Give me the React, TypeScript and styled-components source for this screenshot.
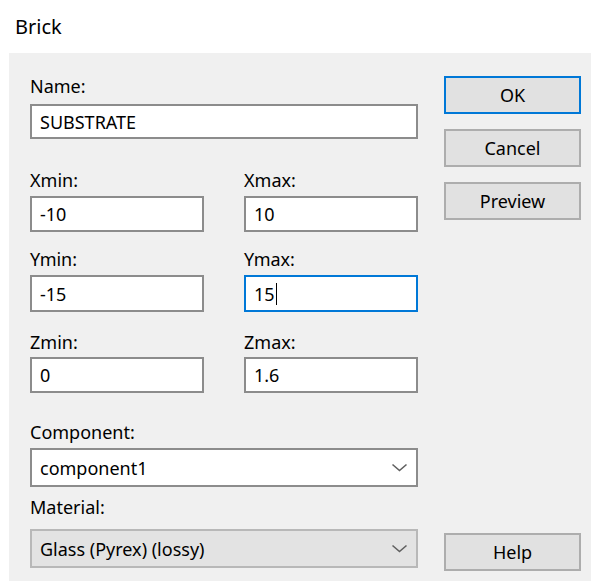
import React from "react";
import styled, { createGlobalStyle, css } from "styled-components";

const GlobalStyle = createGlobalStyle`
  html, body {
    margin: 0;
    padding: 0;
    background: #fff;
  }
  body {
    font-family: "Noto Sans", "Open Sans", "DejaVu Sans", sans-serif;
    color: #000;
  }
`;

const Window = styled.div`
  width: 593px;
  height: 581px;
  display: flex;
  flex-direction: column;
  background: #fff;
  overflow: hidden;
`;

const Title = styled.div`
  height: 53px;
  padding-left: 15px;
  box-sizing: border-box;
  font-size: 20px;
  line-height: 54px;
`;

const Panel = styled.div`
  flex: 1;
  margin-left: 9px;
  margin-right: 2px;
  padding: 0 10px 10px 21px;
  background: #f0f0f0;
  display: grid;
  grid-template-columns: 388px 137px;
  column-gap: 26px;
`;

const Form = styled.div`
  display: flex;
  flex-direction: column;
`;

const Row = styled.div<{ $top: number }>`
  margin-top: ${(p) => p.$top}px;
  display: grid;
  grid-template-columns: 174px 174px;
  column-gap: 40px;
`;

const Field = styled.div<{ $top?: number; $gap?: number }>`
  display: flex;
  flex-direction: column;
  margin-top: ${(p) => p.$top ?? 0}px;
  gap: ${(p) => p.$gap ?? 6}px;
`;

const Label = styled.div`
  font-size: 18px;
  line-height: 20px;
`;

const boxBase = css`
  box-sizing: border-box;
  display: flex;
  align-items: center;
  padding: 0 8px;
  font-size: 18px;
  border: 2px solid #8c8c8c;
  background: #fff;
`;

const TextBox = styled.div<{ $focused?: boolean; $h?: number }>`
  ${boxBase};
  height: ${(p) => p.$h ?? 36}px;
  ${(p) =>
    p.$focused &&
    css`
      border-color: #0078d7;
    `}
`;

const Caret = styled.span`
  display: inline-block;
  width: 1.5px;
  height: 22px;
  margin-left: 1px;
  background: #000;
`;

const Select = styled.div<{ $disabled?: boolean }>`
  ${boxBase};
  height: 39px;
  justify-content: space-between;
  padding-right: 8px;
  ${(p) =>
    p.$disabled &&
    css`
      background: #e3e3e3;
      border-color: #b8b8b8;
    `}
`;

const Buttons = styled.div`
  display: flex;
  flex-direction: column;
  gap: 15px;
  padding-top: 23px;
`;

const Button = styled.button<{ $primary?: boolean }>`
  height: 38px;
  box-sizing: border-box;
  background: #e1e1e1;
  border: 2px solid ${(p) => (p.$primary ? "#0078d7" : "#adadad")};
  font-family: inherit;
  font-size: 18px;
  color: #000;
  padding: 0;
  cursor: pointer;
`;

const HelpButton = styled(Button)`
  margin-top: auto;
`;

const Chevron = () => (
  <svg width="17" height="9" viewBox="0 0 17 9">
    <polyline points="1.5,1.5 8.5,7.5 15.5,1.5" fill="none" stroke="#606060" strokeWidth="1.6" />
  </svg>
);

const App = () => {
  return (
    <>
      <GlobalStyle />
      <Window>
        <Title>Brick</Title>
        <Panel>
          <Form>
            <Field $top={23} $gap={8}>
              <Label>Name:</Label>
              <TextBox $h={35}>SUBSTRATE</TextBox>
            </Field>

            <Row $top={31}>
              <Field>
                <Label>Xmin:</Label>
                <TextBox>-10</TextBox>
              </Field>
              <Field>
                <Label>Xmax:</Label>
                <TextBox>10</TextBox>
              </Field>
            </Row>

            <Row $top={17}>
              <Field>
                <Label>Ymin:</Label>
                <TextBox $h={37}>-15</TextBox>
              </Field>
              <Field>
                <Label>Ymax:</Label>
                <TextBox $h={37} $focused>
                  15<Caret />
                </TextBox>
              </Field>
            </Row>

            <Row $top={20}>
              <Field $gap={5}>
                <Label>Zmin:</Label>
                <TextBox>0</TextBox>
              </Field>
              <Field $gap={5}>
                <Label>Zmax:</Label>
                <TextBox>1.6</TextBox>
              </Field>
            </Row>

            <Field $top={29}>
              <Label>Component:</Label>
              <Select>
                component1
                <Chevron />
              </Select>
            </Field>

            <Field $top={10} $gap={12}>
              <Label>Material:</Label>
              <Select $disabled>
                Glass (Pyrex) (lossy)
                <Chevron />
              </Select>
            </Field>
          </Form>

          <Buttons>
            <Button $primary>OK</Button>
            <Button>Cancel</Button>
            <Button>Preview</Button>
            <HelpButton>Help</HelpButton>
          </Buttons>
        </Panel>
      </Window>
    </>
  );
};

export default App;
